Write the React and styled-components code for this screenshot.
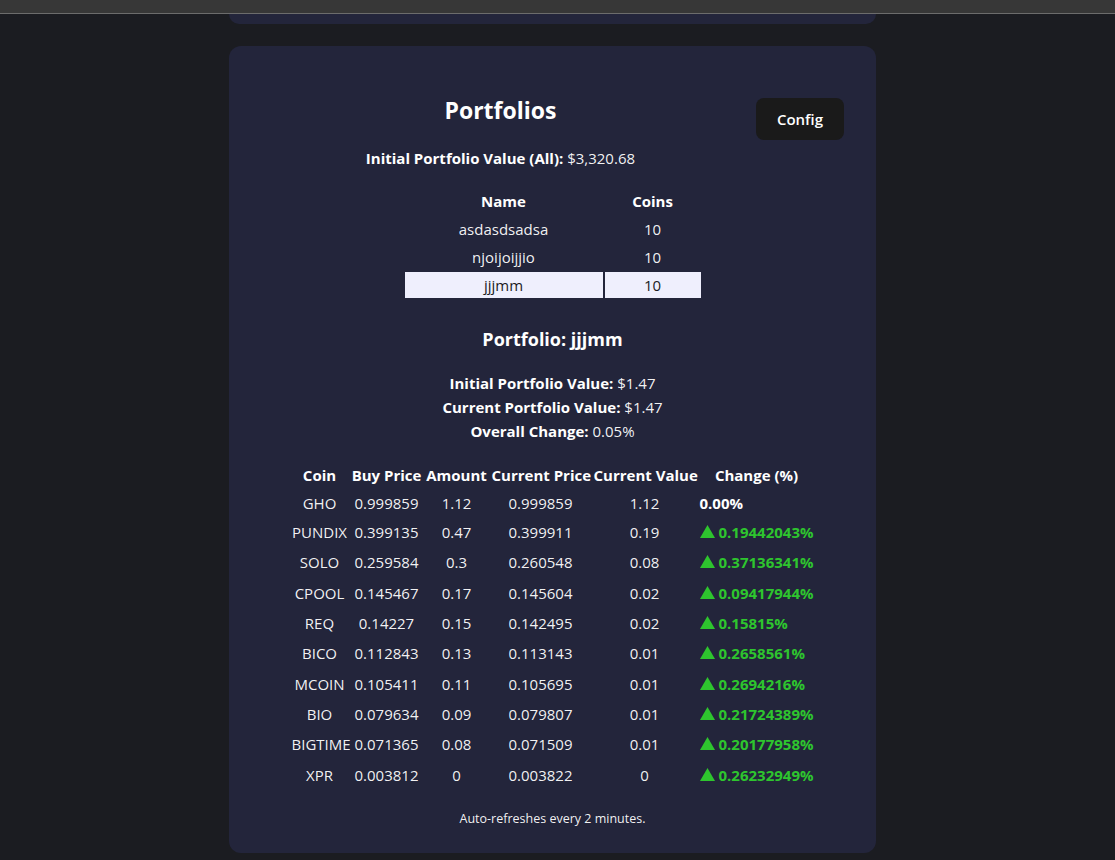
import React from 'react';
import { styled, createGlobalStyle } from 'styled-components';

const GlobalStyle = createGlobalStyle`
  html, body {
    margin: 0;
    background: #1b1c21;
  }
  body {
    font-family: "Open Sans", "Noto Sans", "Liberation Sans", sans-serif;
    font-size: 15px;
    line-height: 1.6;
    color: rgba(255, 255, 255, 0.95);
  }
`;

const TopBar = styled.div`
  height: 13px;
  background: #373737;
  border-bottom: 1px solid #6c6c6c;
`;

const Page = styled.div`
  display: flex;
  flex-direction: column;
  align-items: center;
  gap: 22px;
  padding-right: 10px;
`;

const Card = styled.section`
  width: 647px;
  box-sizing: border-box;
  background: #23253b;
  border-radius: 12px;
`;

const PrevCard = styled(Card)`
  height: 10px;
  border-radius: 0 0 12px 12px;
`;

const MainCard = styled(Card)`
  padding: 46px 32px 24px;
`;

const Header = styled.div`
  display: flex;
  align-items: flex-start;
  gap: 16px;
`;

const HeaderText = styled.div`
  flex: 1;
  text-align: center;
`;

const Title = styled.h2`
  margin: 0;
  font-size: 23px;
  line-height: 36px;
  font-weight: 700;
  color: #fff;
`;

const Line = styled.p`
  margin: ${p => p.$top || 0}px 0 0;
  text-align: center;
  line-height: 24px;
  b {
    font-weight: 700;
    color: #fff;
  }
`;

const ConfigButton = styled.button`
  margin-top: 6px;
  padding: 9px 20px;
  border: 1px solid transparent;
  border-radius: 8px;
  background: #1a1a1a;
  color: #fff;
  font-family: inherit;
  font-size: 15px;
  font-weight: 600;
  line-height: 22px;
  cursor: pointer;
`;

const Table = styled.table`
  margin: ${p => p.$top}px auto 0;
  width: ${p => p.$width}px;
  table-layout: fixed;
  border-spacing: 2px;
  th, td {
    padding: 1px;
    text-align: center;
    white-space: nowrap;
    line-height: 24px;
  }
  th {
    font-weight: 700;
    color: #fff;
  }
`;

const Col = styled.th`
  width: ${p => p.$w}px;
`;

const NameRow = styled.tr`
  cursor: pointer;
  td {
    background: ${p => (p.$selected ? '#efeffd' : 'transparent')};
    color: ${p => (p.$selected ? '#1c1c24' : 'inherit')};
  }
`;

const SubTitle = styled.h3`
  margin: 25px 0 0;
  text-align: center;
  font-size: 18px;
  line-height: 28px;
  font-weight: 700;
  color: #fff;
`;

const ChangeCell = styled.td`
  && {
    text-align: left;
  }
`;

const Flat = styled.span`
  font-weight: 700;
  color: #fff;
`;

const Up = styled.span`
  display: flex;
  align-items: center;
  gap: 4px;
  height: 26.3px;
  font-weight: 700;
  color: #2ec52e;
  svg {
    flex: none;
    margin-top: -1px;
  }
`;

const Footer = styled.p`
  margin: 18px 0 0;
  text-align: center;
  font-size: 12.5px;
  line-height: 20px;
`;

const portfolios = [
  { name: 'asdasdsadsa', coins: 10 },
  { name: 'njoijoijjio', coins: 10 },
  { name: 'jjjmm', coins: 10 },
];

const holdings = [
  ['GHO', '0.999859', '1.12', '0.999859', '1.12', null],
  ['PUNDIX', '0.399135', '0.47', '0.399911', '0.19', '0.19442043%'],
  ['SOLO', '0.259584', '0.3', '0.260548', '0.08', '0.37136341%'],
  ['CPOOL', '0.145467', '0.17', '0.145604', '0.02', '0.09417944%'],
  ['REQ', '0.14227', '0.15', '0.142495', '0.02', '0.15815%'],
  ['BICO', '0.112843', '0.13', '0.113143', '0.01', '0.2658561%'],
  ['MCOIN', '0.105411', '0.11', '0.105695', '0.01', '0.2694216%'],
  ['BIO', '0.079634', '0.09', '0.079807', '0.01', '0.21724389%'],
  ['BIGTIME', '0.071365', '0.08', '0.071509', '0.01', '0.20177958%'],
  ['XPR', '0.003812', '0', '0.003822', '0', '0.26232949%'],
];

const Triangle = () => (
  <svg width="15" height="13" viewBox="0 0 15 13" aria-hidden="true">
    <polygon points="7.5,0 15,13 0,13" fill="currentColor" />
  </svg>
);

export default function App() {
  const selected = 'jjjmm';
  return (
    <>
      <GlobalStyle />
      <TopBar />
      <Page>
        <PrevCard />
        <MainCard>
          <Header>
            <HeaderText>
              <Title>Portfolios</Title>
              <Line $top={18}>
                <b>Initial Portfolio Value (All):</b> $3,320.68
              </Line>
            </HeaderText>
            <ConfigButton>Config</ConfigButton>
          </Header>

          <Table $top={16} $width={300}>
            <thead>
              <tr>
                <Col $w={196}>Name</Col>
                <Col $w={94}>Coins</Col>
              </tr>
            </thead>
            <tbody>
              {portfolios.map(p => (
                <NameRow key={p.name} $selected={p.name === selected}>
                  <td>{p.name}</td>
                  <td>{p.coins}</td>
                </NameRow>
              ))}
            </tbody>
          </Table>

          <SubTitle>Portfolio: {selected}</SubTitle>
          <Line $top={18}>
            <b>Initial Portfolio Value:</b> $1.47
          </Line>
          <Line>
            <b>Current Portfolio Value:</b> $1.47
          </Line>
          <Line>
            <b>Overall Change:</b> 0.05%
          </Line>

          <Table $top={17} $width={528}>
            <thead>
              <tr>
                <Col $w={56}>Coin</Col>
                <Col $w={70}>Buy Price</Col>
                <Col $w={62}>Amount</Col>
                <Col $w={98}>Current Price</Col>
                <Col $w={102}>Current Value</Col>
                <Col $w={114}>Change (%)</Col>
              </tr>
            </thead>
            <tbody>
              {holdings.map(([coin, buy, amount, price, value, change]) => (
                <tr key={coin}>
                  <td>{coin}</td>
                  <td>{buy}</td>
                  <td>{amount}</td>
                  <td>{price}</td>
                  <td>{value}</td>
                  <ChangeCell>
                    {change ? (
                      <Up>
                        <Triangle />
                        {change}
                      </Up>
                    ) : (
                      <Flat>0.00%</Flat>
                    )}
                  </ChangeCell>
                </tr>
              ))}
            </tbody>
          </Table>

          <Footer>Auto-refreshes every 2 minutes.</Footer>
        </MainCard>
      </Page>
    </>
  );
}
